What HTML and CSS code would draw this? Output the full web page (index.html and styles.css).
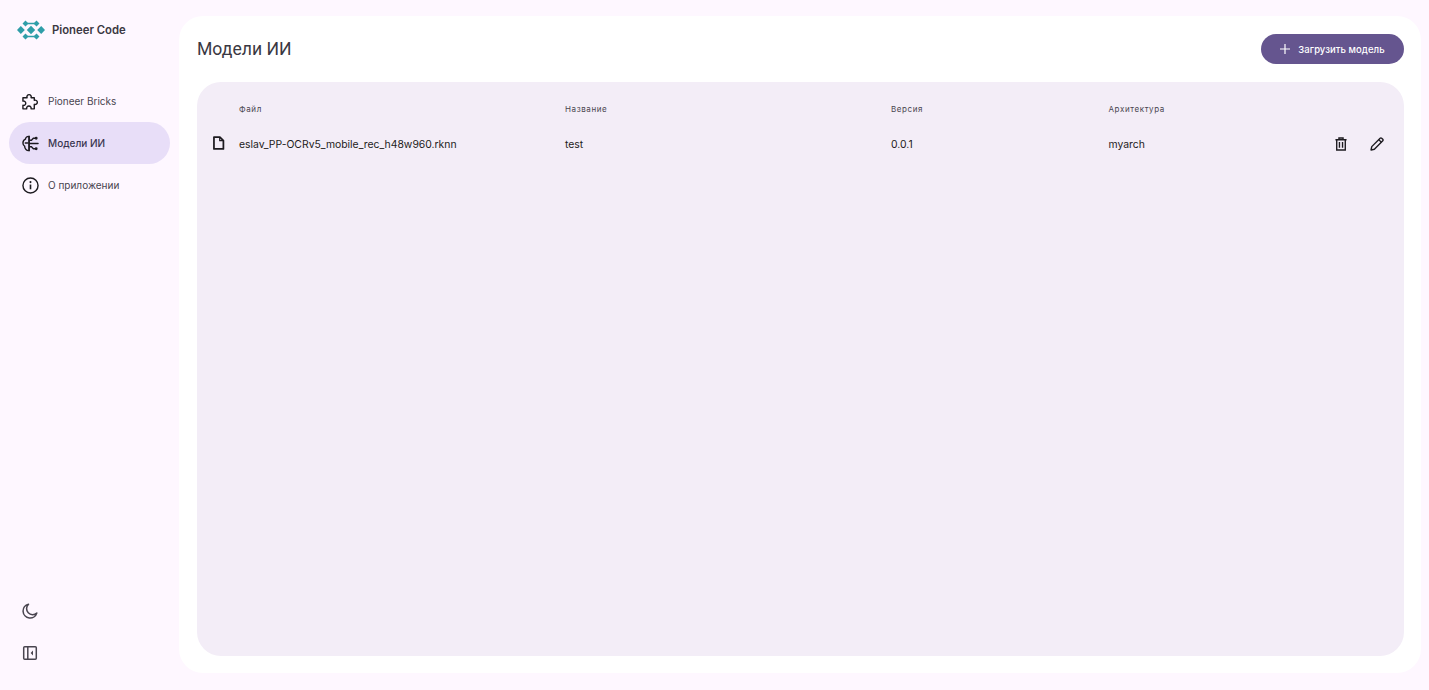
FILE: index.html
```html
<!DOCTYPE html>
<html lang="ru">
<head>
    <meta charset="UTF-8">
    <meta name="viewport" content="width=device-width, initial-scale=1.0">
    <title>Модели ИИ</title>
    <link rel="stylesheet" href="styles.css">
</head>
<body>
    <aside class="sidebar">
        <div class="logo">
            <svg class="logo-icon" width="28" height="20" viewBox="0 0 28 20" fill="#2f9ea8" stroke="#2f9ea8">
                <path d="M9 3.5H19M9 16.5H19" stroke-width="1.6" fill="none"/>
                <path stroke="none" d="M8.5 .6l3 3-3 3-3-3zM19.5 .6l3 3-3 3-3-3zM8.5 13.4l3 3-3 3-3-3zM19.5 13.4l3 3-3 3-3-3zM3.8 6l4 4-4 4-3.8-4zM14 5.8l4.2 4.2-4.2 4.2L9.8 10zM24.2 6l3.8 4-3.8 4-4-4z"/>
            </svg>
            <span>Pioneer Code</span>
        </div>
        <nav class="nav">
            <a class="nav-item" href="#">
                <svg width="17" height="17" viewBox="0 0 18 18" fill="none" stroke="#1d1b20" stroke-width="1.5" stroke-linejoin="round">
                    <path d="M1 5H5.4a2.3 2.3 0 1 1 4.2 0H13V7.8a2.3 2.3 0 1 1 0 4.2V16.8H9.6a2.4 2.4 0 1 0-4.6 0H1V13a2.3 2.3 0 1 0 0-4.4z"/>
                </svg>
                <span>Pioneer Bricks</span>
            </a>
            <a class="nav-item active" href="#">
                <svg width="17" height="17" viewBox="0 0 18 18" fill="none" stroke="#1d1b20" stroke-width="1.5" stroke-linecap="round">
                    <path d="M7.5 1.5C5.5 1.2 3.8 2.4 3.6 4.4 1.9 5 1 6.6 1 8.5c0 1.5.7 2.7 1.8 3.4 0 2.8 2.2 5 4.7 4.6z"/>
                    <path d="M7.5 1.5V16.5M7.5 9H17M7.5 5.5h2.5l2-2h1.5M7.5 12.5H10l2 2h1.5M3.5 8.5H6"/>
                    <circle cx="15" cy="3.5" r=".8"/>
                    <circle cx="15" cy="14.5" r=".8"/>
                </svg>
                <span>Модели ИИ</span>
            </a>
            <a class="nav-item" href="#">
                <svg width="17" height="17" viewBox="0 0 18 18" fill="none" stroke="#1d1b20" stroke-width="1.5">
                    <circle cx="9" cy="9" r="8"/>
                    <path d="M9 8v5" stroke-width="1.7"/>
                    <circle cx="9" cy="5.4" r="1.1" fill="#1d1b20" stroke="none"/>
                </svg>
                <span>О приложении</span>
            </a>
        </nav>
        <div class="side-bottom">
            <button class="side-btn" type="button">
                <svg width="16" height="16" viewBox="0 0 16 16" fill="none" stroke="#49454f" stroke-width="1.5" stroke-linejoin="round">
                    <path d="M6.5 1.2A7 7 0 1 0 14.8 10 6 6 0 0 1 6.5 1.2z"/>
                </svg>
            </button>
            <button class="side-btn" type="button">
                <svg width="16" height="16" viewBox="0 0 16 16" fill="none" stroke="#49454f" stroke-width="1.5">
                    <rect x="1.7" y="1.7" width="12.6" height="12.6" rx="1"/>
                    <path d="M5.8 1.7V14.3"/>
                    <path d="M11 5.6V10.4L8.6 8z" fill="#49454f" stroke="none"/>
                </svg>
            </button>
        </div>
    </aside>
    <main class="main">
        <div class="head">
            <h1>Модели ИИ</h1>
            <button class="upload" type="button">
                <svg width="10" height="10" viewBox="0 0 10 10" stroke="#fff" stroke-width="1.2"><path d="M5 0V10M0 5H10"/></svg>
                <span>Загрузить модель</span>
            </button>
        </div>
        <section class="panel">
            <div class="row row-head">
                <span></span>
                <span>Файл</span>
                <span>Название</span>
                <span>Версия</span>
                <span>Архитектура</span>
                <span></span>
            </div>
            <div class="row row-data">
                <svg class="file-icon" width="13" height="14" viewBox="0 0 14 16" fill="none" stroke="#1d1b20" stroke-width="2" stroke-linejoin="round">
                    <path d="M1.8 1.2H8.6L12.6 5.2V14.8H1.8z"/>
                    <path d="M8.4 1.2V5.4H12.6" stroke-width="1.4"/>
                </svg>
                <span>eslav_PP-OCRv5_mobile_rec_h48w960.rknn</span>
                <span>test</span>
                <span>0.0.1</span>
                <span>myarch</span>
                <div class="actions">
                    <svg width="12" height="14" viewBox="0 0 14 16" fill="none" stroke="#1d1b20" stroke-width="1.6">
                        <path d="M0.5 3H13.5M4.6 3V1H9.4V3"/>
                        <path d="M2 3V15H12V3"/>
                        <path d="M5.2 5.6V12.4M8.8 5.6V12.4"/>
                    </svg>
                    <svg width="14" height="14" viewBox="0 0 16 16" fill="none" stroke="#1d1b20" stroke-width="1.6" stroke-linejoin="round">
                        <path d="M1.2 14.8L2 11 11.6 1.4a1.2 1.2 0 0 1 1.7 0l1.3 1.3a1.2 1.2 0 0 1 0 1.7L5 14z"/>
                        <path d="M10 3l3 3"/>
                    </svg>
                </div>
            </div>
        </section>
    </main>
</body>
</html>
```

FILE: styles.css
```css
* {
    box-sizing: border-box;
}
body {
    margin: 0;
    height: 690px;
    overflow: hidden;
    display: flex;
    background: #fef7ff;
    color: #1d1b20;
    font-family: 'Inter', 'Roboto', sans-serif;
}
.sidebar {
    width: 179px;
    flex-shrink: 0;
    display: flex;
    flex-direction: column;
    padding: 20px 9px 29px;
}
.logo {
    display: flex;
    align-items: center;
    gap: 7px;
    height: 20px;
    padding-left: 8px;
    font-size: 11.3px;
    font-weight: 600;
    color: #3b3842;
}
.nav {
    display: flex;
    flex-direction: column;
    margin-top: 40px;
}
.nav-item {
    display: flex;
    align-items: center;
    gap: 9px;
    height: 42px;
    padding-left: 13px;
    border-radius: 21px;
    font-size: 10px;
    color: #49454f;
    text-decoration: none;
}
.nav-item.active {
    background: #e8def8;
    color: #3a3650;
    font-weight: 500;
}
.side-bottom {
    margin-top: auto;
    display: flex;
    flex-direction: column;
    gap: 26px;
    padding-left: 13px;
}
.side-btn {
    width: 16px;
    height: 16px;
    padding: 0;
    border: none;
    background: none;
    display: block;
}
.main {
    width: 1242px;
    height: 657px;
    margin-top: 16px;
    padding: 18px 17px 17px 18px;
    background: #fff;
    border-radius: 24px;
    display: flex;
    flex-direction: column;
}
.head {
    display: flex;
    align-items: center;
    justify-content: space-between;
    height: 30px;
    margin-bottom: 18px;
}
h1 {
    margin: 0;
    font-family: 'Roboto', sans-serif;
    font-size: 17.6px;
    font-weight: 400;
    color: #3a3842;
}
.upload {
    width: 143px;
    height: 30px;
    display: flex;
    align-items: center;
    justify-content: center;
    gap: 8px;
    border: none;
    border-radius: 15px;
    background: #65558f;
    color: #fff;
    font-family: inherit;
    font-size: 9.5px;
    font-weight: 500;
    letter-spacing: 0.05px;
}
.panel {
    flex: 1;
    background: #f3edf7;
    border-radius: 24px;
}
.row {
    display: grid;
    grid-template-columns: 42px 326px 326px 217.5px 1fr 70px;
    align-items: center;
}
.row-head {
    height: 52px;
    padding-top: 1px;
    font-size: 8px;
    letter-spacing: 0.6px;
    color: #49454f;
}
.row-data {
    height: 20px;
    font-size: 10.4px;
    color: #1d1b20;
}
.file-icon {
    margin-left: 15px;
    margin-top: -3px;
}
.actions {
    display: flex;
    align-items: center;
    gap: 23px;
    padding-left: 1px;
}
```
